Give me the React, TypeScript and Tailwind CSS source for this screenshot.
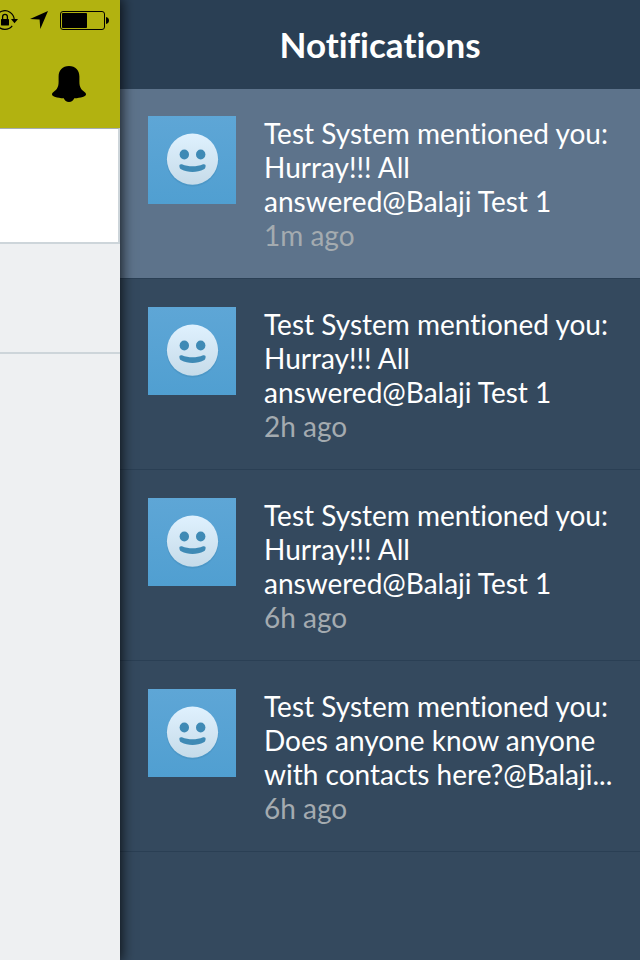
import React from 'react';

interface Notification {
  id: number;
  text: string;
  time: string;
  unread?: boolean;
}

const notifications: Notification[] = [
  { id: 1, text: 'Test System mentioned you: Hurray!!! All answered@Balaji Test 1', time: '1m ago', unread: true },
  { id: 2, text: 'Test System mentioned you: Hurray!!! All answered@Balaji Test 1', time: '2h ago' },
  { id: 3, text: 'Test System mentioned you: Hurray!!! All answered@Balaji Test 1', time: '6h ago' },
  { id: 4, text: 'Test System mentioned you: Does anyone know anyone with contacts here?@Balaji...', time: '6h ago' },
];

const RotationLockIcon: React.FC = () => (
  <svg className="w-[22px] h-5" viewBox="0 0 22 20" fill="none" stroke="#000">
    <path d="M16.200 15.800A9.300 9.300 0 1 1 18.200 9.200" strokeWidth="1.200" />
    <path d="M15 9h7l-3.500 4.200z" fill="#000" stroke="none" />
    <rect x="5" y="9" width="8" height="6.400" rx=".6" fill="#000" stroke="none" />
    <path d="M6.600 9.200V6.800a2.400 2.400 0 0 1 4.800 0v2.400" strokeWidth="1.300" />
  </svg>
);

const LocationIcon: React.FC = () => (
  <svg className="w-[18px] h-[18px]" viewBox="0 0 18 18">
    <path d="M18 0L10.300 18 9.600 8.600 0 8z" />
  </svg>
);

const BatteryIcon: React.FC = () => (
  <svg className="w-[49px] h-[19px]" viewBox="0 0 49 19">
    <rect x=".5" y=".5" width="44" height="18" rx="2.500" fill="none" stroke="#000" />
    <rect x="2" y="2" width="25" height="15" rx=".8" />
    <path d="M46 6c4 .4 4 6.600 0 7z" />
  </svg>
);

const BellIcon: React.FC = () => (
  <svg className="w-[34px] h-9" viewBox="0 0 34 36">
    <path d="M17 0C10.500 0 6.600 4.200 6.600 10.500v5.300c0 5.200-1.600 7.600-4.800 10C.5 26.800 0 27.500 0 28.400c0 1.900 5 3.400 11.800 3.900C12.600 34.500 14.500 36 17 36s4.400-1.500 5.200-3.700C29 31.800 34 30.300 34 28.400c0-.9-.5-1.600-1.800-2.600-3.200-2.400-4.800-4.800-4.800-10v-5.300C27.400 4.200 23.500 0 17 0z" />
  </svg>
);

const Avatar: React.FC = () => (
  <div className="w-[88px] h-[88px] shrink-0 bg-linear-to-b from-[#5ea6d6] to-[#509fd1]">
    <svg className="w-full h-full" viewBox="0 0 88 88">
      <defs>
        <linearGradient id="face" x1="0" y1="0" x2="0" y2="1">
          <stop offset="0" stopColor="#dff1fe" />
          <stop offset="1" stopColor="#c6dbe9" />
        </linearGradient>
      </defs>
      <circle cx="44.500" cy="44.500" r="26" fill="#3f87b4" opacity=".35" />
      <circle cx="44.500" cy="43.200" r="25.600" fill="url(#face)" />
      <ellipse cx="36.300" cy="38.500" rx="4.700" ry="4.900" fill="#3f8ab5" />
      <ellipse cx="52.700" cy="38.500" rx="4.700" ry="4.900" fill="#3f8ab5" />
      <path d="M31.400 50.200c-.4-1.400 1-2.500 2.500-1.900 6.800 2.700 14.400 2.700 21.200 0 1.500-.6 2.900.5 2.500 1.900-.3 1.300-.3 2.300-1.700 3-7 3.600-15.800 3.600-22.800 0-1.400-.7-1.400-1.700-1.700-3z" fill="#3f8ab5" />
    </svg>
  </div>
);

const NotificationRow: React.FC<{ item: Notification }> = ({ item }) => (
  <li
    className={`flex gap-7 pt-7 pb-[26px] pl-7 pr-5 border-b border-[#2a3f54] first:border-t first:pt-[27px] ${item.unread ? 'bg-[#5d738b]' : ''}`}
  >
    <Avatar />
    <div className="flex-1 min-w-0 text-[28px] leading-[34px]">
      <p className="text-white">{item.text}</p>
      <p className="text-[#a4abb0]">{item.time}</p>
    </div>
  </li>
);

export default function App() {
  return (
    <div className="flex min-h-screen font-['Lato',sans-serif] [font-variant-ligatures:none]">
      <main className="relative z-10 w-[120px] shrink-0 bg-[#eef0f2] shadow-[0_0_12px_2px_rgba(0,0,0,0.75)]">
        <header className="flex flex-col items-end h-32 bg-[#b2b210]">
          <div className="flex items-center h-10 pr-[11px]">
            <RotationLockIcon />
            <span className="pl-3"><LocationIcon /></span>
            <span className="pl-3"><BatteryIcon /></span>
          </div>
          <button type="button" aria-label="Notifications" className="mt-[26px] mr-[34px]">
            <BellIcon />
          </button>
        </header>
        <div className="h-[116px] bg-white border-t border-t-[#a5adb3] border-r-2 border-r-[#cdd5da] border-b-2 border-b-[#cdd5da]" />
        <div className="h-[110px] border-b-2 border-[#cdd5da]" />
      </main>
      <aside className="flex-1 min-w-0 bg-[#34495e]">
        <header className="flex items-center justify-center h-[88px] bg-[#2a3f54]">
          <h1 className="text-white text-[35px] leading-10 font-bold">Notifications</h1>
        </header>
        <ul>
          {notifications.map((item) => (
            <NotificationRow key={item.id} item={item} />
          ))}
        </ul>
      </aside>
    </div>
  );
}
